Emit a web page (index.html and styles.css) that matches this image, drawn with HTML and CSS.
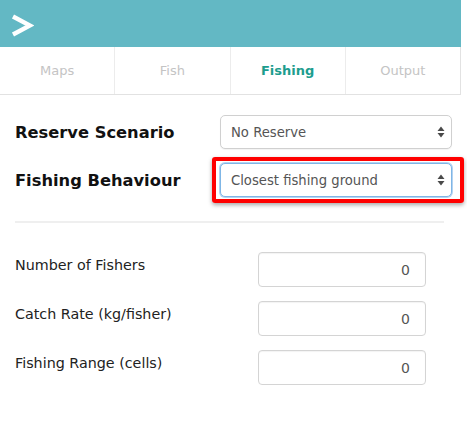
FILE: index.html
```html
<!DOCTYPE html>
<html>
<head>
<meta charset="utf-8">
<link rel="stylesheet" href="styles.css">
</head>
<body>
<div class="panel">
  <div class="header">
    <svg class="toggle" width="24" height="24" viewBox="0 0 24 24"><path d="M3 2.5 L20 11.5 L3 20.5" fill="none" stroke="#fff" stroke-width="4.4" stroke-linejoin="miter"/></svg>
  </div>
  <div class="tabs">
    <div class="tab">Maps</div>
    <div class="tab">Fish</div>
    <div class="tab active">Fishing</div>
    <div class="tab">Output</div>
  </div>
  <div class="content">
    <div class="row">
      <label class="big-label">Reserve Scenario</label>
      <div class="select-wrap">
        <select class="select"><option>No Reserve</option></select>
        <svg class="arrows" width="8" height="12" viewBox="0 0 8 12"><path d="M4 0.5 L7.5 5 L0.5 5 Z M4 11.5 L7.5 7 L0.5 7 Z" fill="#4a4a4a"/></svg>
      </div>
    </div>
    <div class="row second">
      <label class="big-label">Fishing Behaviour</label>
      <div class="select-wrap highlighted">
        <select class="select focused"><option>Closest fishing ground</option></select>
        <svg class="arrows" width="8" height="12" viewBox="0 0 8 12"><path d="M4 0.5 L7.5 5 L0.5 5 Z M4 11.5 L7.5 7 L0.5 7 Z" fill="#4a4a4a"/></svg>
      </div>
    </div>
    <div class="divider"></div>
    <div class="num-row first">
      <label class="small-label">Number of Fishers</label>
      <input class="num" type="text" value="0">
    </div>
    <div class="num-row">
      <label class="small-label">Catch Rate (kg/fisher)</label>
      <input class="num" type="text" value="0">
    </div>
    <div class="num-row">
      <label class="small-label">Fishing Range (cells)</label>
      <input class="num" type="text" value="0">
    </div>
  </div>
</div>
</body>
</html>
```

FILE: styles.css
```css
html, body {
  margin: 0;
  padding: 0;
  background: #fff;
}
body {
  font-family: "DejaVu Sans", Verdana, sans-serif;
  color: #222;
}
.panel {
  width: 461px;
}
.header {
  height: 47px;
  background: #63b8c4;
  display: flex;
  align-items: center;
  padding-left: 10px;
  box-sizing: border-box;
}
.toggle {
  display: block;
  margin-top: 5px;
}
.tabs {
  display: flex;
  height: 48px;
  border-bottom: 1px solid #e2e2e2;
  border-right: 1px solid #e2e2e2;
  box-sizing: border-box;
}
.tab {
  flex: 1;
  display: flex;
  align-items: center;
  justify-content: center;
  font-size: 13px;
  color: #c4c4c4;
  border-left: 1px solid #ececec;
}
.tab:first-child {
  border-left: none;
}
.tab.active {
  color: #1d9d8e;
  font-weight: bold;
}
.content {
  padding-left: 15px;
}
.row {
  display: flex;
  align-items: center;
  margin-top: 20px;
}
.row.second {
  margin-top: 14px;
}
.big-label {
  width: 205px;
  font-size: 16.3px;
  font-weight: bold;
  color: #111;
}
.select-wrap {
  position: relative;
  width: 232px;
  height: 34px;
}
.select-wrap.highlighted::after {
  content: "";
  position: absolute;
  left: -8px;
  right: -12px;
  top: -6px;
  bottom: -6px;
  border: 4px solid #ff0000;
  border-radius: 3px;
  box-shadow: 0 2px 4px rgba(0,0,0,0.35);
  pointer-events: none;
}
.select {
  -webkit-appearance: none;
  appearance: none;
  width: 100%;
  height: 100%;
  box-sizing: border-box;
  border: 1px solid #d0d0d0;
  border-radius: 5px;
  background: #fff;
  padding: 0 10px;
  font-family: "DejaVu Sans", Verdana, sans-serif;
  font-size: 13.2px;
  color: #555;
  box-shadow: 0 1px 1px rgba(0,0,0,0.05);
}
.select.focused {
  border-color: #7fb6e6;
  box-shadow: 0 0 0 1px rgba(120,175,230,0.55);
}
.arrows {
  position: absolute;
  right: 7px;
  top: 11px;
  pointer-events: none;
}
.divider {
  width: 429px;
  height: 2px;
  background: #efefef;
  margin-top: 24px;
}
.num-row {
  display: flex;
  align-items: flex-start;
  margin-top: 14px;
}
.num-row.first {
  margin-top: 29px;
}
.small-label {
  width: 243px;
  font-size: 14.3px;
  line-height: 20px;
  padding-top: 3px;
  color: #222;
}
.num {
  width: 168px;
  height: 35px;
  box-sizing: border-box;
  border: 1px solid #d4d4d4;
  border-radius: 4px;
  text-align: right;
  padding: 0 15px;
  font-family: "DejaVu Sans", Verdana, sans-serif;
  font-size: 14px;
  color: #555;
  box-shadow: inset 0 1px 1px rgba(0,0,0,0.05);
  outline: none;
}
```
